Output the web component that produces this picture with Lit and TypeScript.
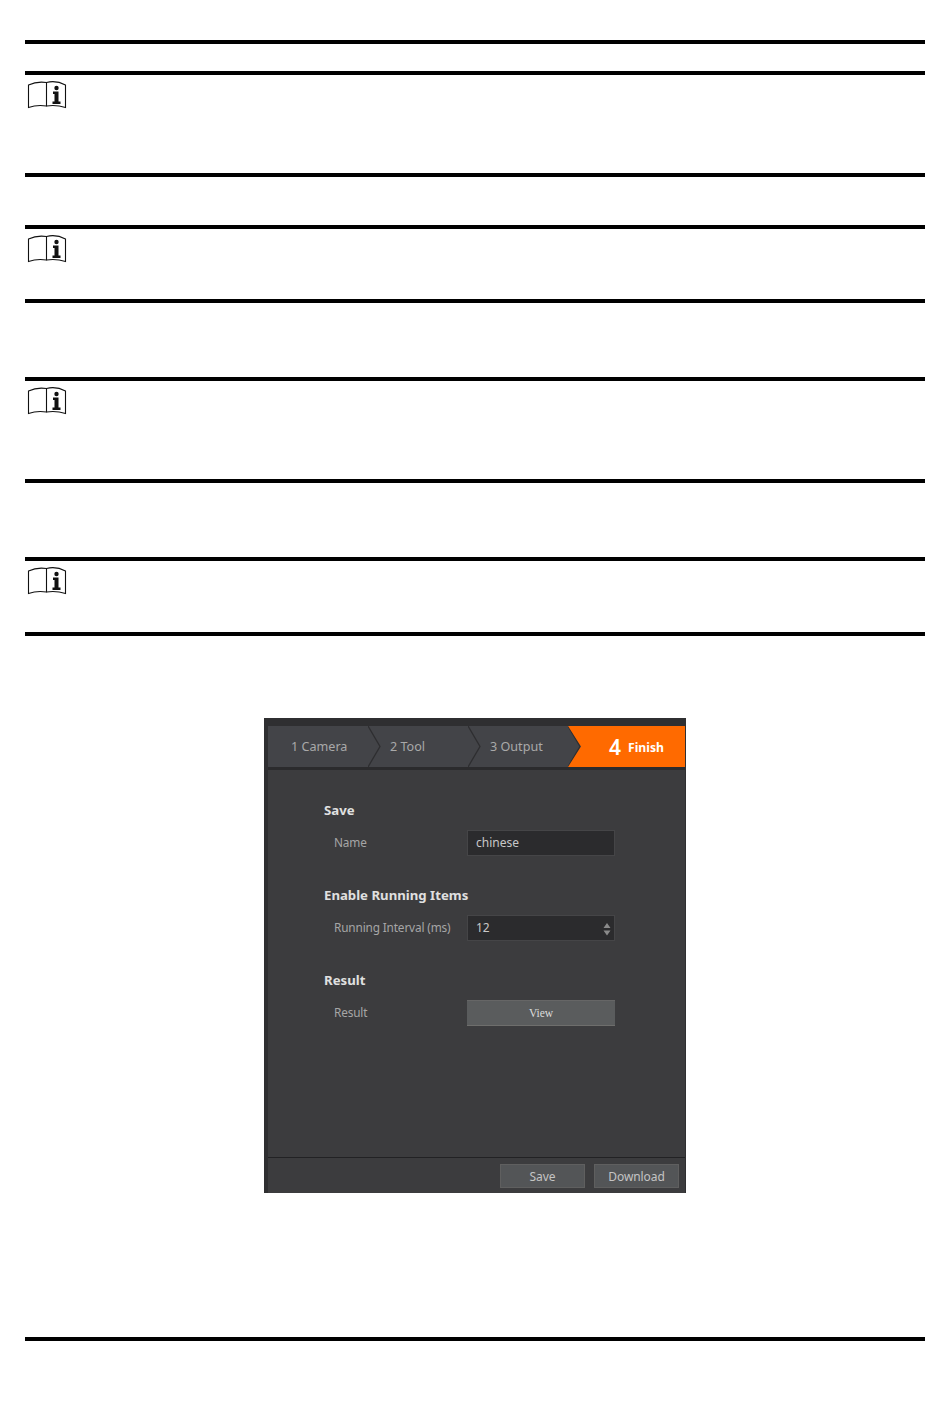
import { LitElement, html, css } from "lit";
import { customElement } from "lit/decorators.js";

const book = html`<svg class="book" width="40" height="30" viewBox="0 0 40 30" fill="none" stroke="#111" stroke-width="1.1">
  <path d="M1.5 6 Q10 2 19.5 3.5 V27 Q10 25.5 1.5 28.5 Z"/>
  <path d="M19.5 3.5 Q29 1 38.5 6 V28.5 Q29 25.5 19.5 27"/>
  <circle cx="29.5" cy="9" r="2.2" fill="#111" stroke="none"/>
  <path d="M26 12.5 H31.5 V22.5 H33.5 V25 H25.5 V22.5 H27.5 V15 H26 Z" fill="#111" stroke="none"/>
</svg>`;

@customElement("app-root")
export class AppRoot extends LitElement {
  static styles = css`
    :host { display: block; width: 950px; height: 1408px; background: #fff; overflow: hidden; font-family: "Noto Sans", sans-serif; }
    .page { padding: 40px 25px 0; display: flex; flex-direction: column; }
    .rule { height: 4px; background: #000; }
    .note { border-top: 4px solid #000; border-bottom: 4px solid #000; box-sizing: border-box; padding: 4px 0 0 2px; }
    .book { display: block; }
    .n1 { margin-top: 27px; height: 106px; }
    .n2 { margin-top: 48px; height: 78px; }
    .n3 { margin-top: 74px; height: 106px; }
    .n4 { margin-top: 74px; height: 79px; }
    .app { margin: 82px 0 0 239px; width: 422px; height: 475px; flex: none; box-sizing: border-box; background: #3c3c3e; border-top: 8px solid #2f2f31; border-left: 4px solid #2f2f31; border-right: 1px solid #2f2f31; display: flex; flex-direction: column; color: #b4b4b4; font-size: 12px; }
    .steps { height: 41px; flex: none; display: flex; background: #434448; border-bottom: 3px solid #2b2b2d; }
    .step { width: 100px; position: relative; display: flex; align-items: center; padding-left: 23px; box-sizing: border-box; color: #a9a9a9; font-size: 12.6px; }
    .step + .step { padding-left: 22px; }
    .chev { position: absolute; right: -13px; top: 0; width: 13px; height: 41px; }
    .finish { flex: 1; background: #ff6a00; color: #fff; clip-path: polygon(0 0, 100% 0, 100% 100%, 0 100%, 13px 50%); display: flex; align-items: center; padding: 1px 0 0 41px; box-sizing: border-box; gap: 7px; font-weight: 700; font-size: 12.2px; }
    .finish b { font-size: 21px; line-height: 1; font-weight: 600; }
    .body { flex: 1; padding: 31px 0 0 56px; display: flex; flex-direction: column; }
    .section { height: 85px; }
    .title { font-weight: 700; font-size: 13.2px; color: #e0e0e0; height: 19px; line-height: 19px; }
    .row { display: grid; grid-template-columns: 143px 148px; margin-top: 10px; height: 26px; }
    .label { padding-left: 10px; line-height: 25px; font-size: 11.8px; letter-spacing: -0.14px; color: #a6a6a6; }
    .input { box-sizing: border-box; height: 26px; background: #2b2b2d; border: 1px solid #454547; padding: 0 8px; line-height: 24px; color: #c8c8c8; position: relative; }
    .spin { position: absolute; right: 3px; top: 7px; }
    .view { box-sizing: border-box; height: 26px; background: #5a5c5d; border-bottom: 1px solid #6e6e6c; border-top: 1px solid #666; text-align: center; line-height: 24px; font-family: "Liberation Serif", serif; font-size: 11.5px; color: #dcdcdc; }
    .footer { height: 36px; flex: none; border-top: 1px solid #222224; display: flex; justify-content: flex-end; gap: 9px; padding: 6px 6px 0 0; box-sizing: border-box; }
    .btn { box-sizing: border-box; height: 24px; width: 85px; background: #535557; border: 1px solid #5f5f5f; text-align: center; line-height: 23px; font-size: 12px; letter-spacing: -0.08px; color: #c4c4c4; }
    .final { margin-top: 144px; flex: none; }
  `;

  render() {
    return html`<div class="page">
      <div class="rule"></div>
      <div class="note n1">${book}</div>
      <div class="note n2">${book}</div>
      <div class="note n3">${book}</div>
      <div class="note n4">${book}</div>
      <div class="app">
        <div class="steps">
          ${["1 Camera", "2 Tool", "3 Output"].map(
            (s) => html`<div class="step">${s}
              <svg class="chev" viewBox="0 0 13 41" fill="none" stroke="#2e2e30" stroke-width="1.3"><path d="M0 0 L12 20.5 L0 41"/></svg></div>`
          )}
          <div class="finish"><b>4</b><span>Finish</span></div>
        </div>
        <div class="body">
          <div class="section">
            <div class="title">Save</div>
            <div class="row"><div class="label">Name</div><div class="input">chinese</div></div>
          </div>
          <div class="section">
            <div class="title">Enable Running Items</div>
            <div class="row"><div class="label">Running Interval (ms)</div>
              <div class="input">12<svg class="spin" width="8" height="13" viewBox="0 0 8 13" fill="#8a8a8a"><path d="M4 0 L7.5 5 H.5 Z M.5 7.5 H7.5 L4 12.5 Z"/></svg></div></div>
          </div>
          <div class="section">
            <div class="title">Result</div>
            <div class="row"><div class="label">Result</div><div class="view">View</div></div>
          </div>
        </div>
        <div class="footer"><div class="btn">Save</div><div class="btn">Download</div></div>
      </div>
      <div class="rule final"></div>
    </div>`;
  }
}
